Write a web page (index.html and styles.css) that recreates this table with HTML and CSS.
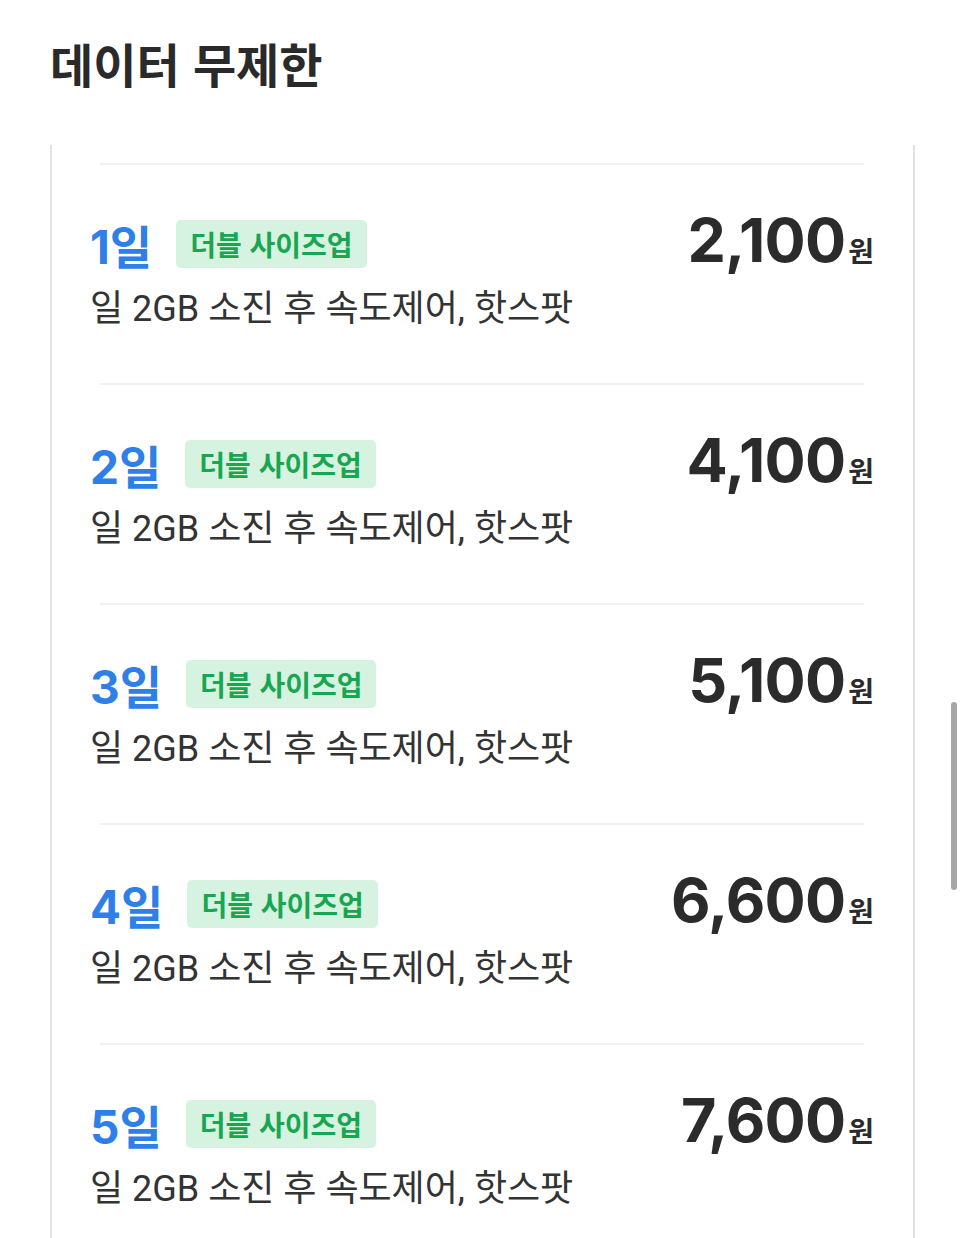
FILE: index.html
```html
<!DOCTYPE html>
<html lang="ko">
<head>
<meta charset="utf-8">
<link rel="stylesheet" href="styles.css">
</head>
<body>
<h1 class="title">데이터 무제한</h1>
<div class="box">
  <div class="row">
    <div class="top">
      <div class="left"><span class="days">1일</span><span class="badge">더블 사이즈업</span></div>
      <div class="price"><span class="num">2,100</span><span class="won">원</span></div>
    </div>
    <div class="desc">일 2GB 소진 후 속도제어, 핫스팟</div>
  </div>
  <div class="row">
    <div class="top">
      <div class="left"><span class="days">2일</span><span class="badge">더블 사이즈업</span></div>
      <div class="price"><span class="num">4,100</span><span class="won">원</span></div>
    </div>
    <div class="desc">일 2GB 소진 후 속도제어, 핫스팟</div>
  </div>
  <div class="row">
    <div class="top">
      <div class="left"><span class="days">3일</span><span class="badge">더블 사이즈업</span></div>
      <div class="price"><span class="num">5,100</span><span class="won">원</span></div>
    </div>
    <div class="desc">일 2GB 소진 후 속도제어, 핫스팟</div>
  </div>
  <div class="row">
    <div class="top">
      <div class="left"><span class="days">4일</span><span class="badge">더블 사이즈업</span></div>
      <div class="price"><span class="num">6,600</span><span class="won">원</span></div>
    </div>
    <div class="desc">일 2GB 소진 후 속도제어, 핫스팟</div>
  </div>
  <div class="row">
    <div class="top">
      <div class="left"><span class="days">5일</span><span class="badge">더블 사이즈업</span></div>
      <div class="price"><span class="num">7,600</span><span class="won">원</span></div>
    </div>
    <div class="desc">일 2GB 소진 후 속도제어, 핫스팟</div>
  </div>
</div>
<div class="scrollbar"></div>
</body>
</html>
```

FILE: styles.css
```css
html, body {
  margin: 0;
  padding: 0;
  background: #fff;
  overflow: hidden;
  height: 1238px;
}
body {
  font-family: "Noto Sans CJK KR", "Noto Sans", sans-serif;
  color: #2b2b2b;
}
.title {
  margin: 0;
  padding: 28px 0 0 50px;
  height: 117px;
  box-sizing: border-box;
  font-size: 47px;
  font-weight: 700;
  line-height: 70px;
  color: #2a2a2a;
}
.box {
  margin-left: 50px;
  width: 865px;
  box-sizing: border-box;
  border-left: 2px solid #e2e2e2;
  border-right: 2px solid #e2e2e2;
  padding: 18px 0 0;
  height: 1093px;
  margin-top: 28px;
}
.row {
  height: 220px;
  box-sizing: border-box;
  border-top: 2px solid #f1f1f1;
  margin: 0 49px 0 48px;
  padding: 46px 0 0;
}
.top {
  display: flex;
  justify-content: space-between;
  align-items: center;
  margin: 0 -10px 0 -10px;
  height: 66px;
}
.left {
  display: flex;
  align-items: center;
  gap: 24px;
}
.days {
  font-family: "Inter", "Noto Sans CJK KR", sans-serif;
  font-size: 46px;
  font-weight: 700;
  color: #2f7fe9;
}
.badge {
  background: #d6f3e1;
  color: #18a651;
  font-size: 28px;
  font-weight: 700;
  height: 48px;
  line-height: 48px;
  padding: 0 14px;
  border-radius: 5px;
}
.price {
  display: flex;
  align-items: baseline;
  align-self: flex-start;
  margin-top: -4px;
}
.num {
  font-family: "Inter", "Noto Sans CJK KR", sans-serif;
  font-size: 61px;
  font-weight: 700;
  line-height: 66px;
  color: #2b2b2b;
  letter-spacing: -0.8px;
}
.won {
  font-size: 28px;
  font-weight: 700;
  margin-left: 3px;
}
.desc {
  margin: 8px -10px 0;
  font-family: "Roboto", "Noto Sans CJK KR", sans-serif;
  font-size: 36px;
  font-weight: 400;
  color: #333;
  line-height: 48px;
}
.scrollbar {
  position: absolute;
  left: 951px;
  top: 702px;
  width: 6px;
  height: 188px;
  border-radius: 3px;
  background: #a7a7a7;
}
```
